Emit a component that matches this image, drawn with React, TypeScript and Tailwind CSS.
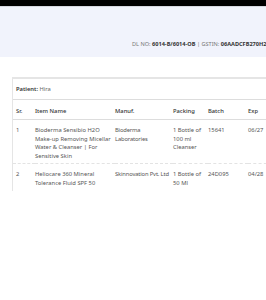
const rows = [
  {
    sr: "1",
    name: "Bioderma Sensibio H2O Make-up Removing Micellar Water & Cleanser | For Sensitive Skin",
    manuf: "Bioderma Laboratories",
    packing: "1 Bottle of 100 ml Cleanser",
    batch: "15641",
    exp: "06/27",
  },
  {
    sr: "2",
    name: "Heliocare 360 Mineral Tolerance Fluid SPF 50",
    manuf: "Skinnovation Pvt. Ltd",
    packing: "1 Bottle of 50 Ml",
    batch: "24D095",
    exp: "04/28",
  },
];

export default function App() {
  return (
    <div className="w-[266px] h-[300px] overflow-hidden bg-white text-[#333] font-['Noto_Sans',sans-serif]">
      <div className="h-[6px] bg-black" />
      <div className="h-[51px] bg-[#f1f3fc] border-t border-[#d6d8e0] flex items-end justify-end pb-[9px]">
        <p className="whitespace-nowrap text-[5.6px] text-[#777] pl-[132px] w-full overflow-hidden">
          DL NO: <span className="font-bold text-[#333]">6014-B/6014-OB</span> | GSTIN:{" "}
          <span className="font-bold text-[#333]">06AADCFB270H2ZR</span>
        </p>
      </div>

      <div className="mt-[20px] ml-[12px] border-t-2 border-l border-[#e5e5e5]">
        <div className="px-[3px] pt-[6px] pb-[5px] text-[5.8px] leading-[8.5px] border-b border-[#ddd]">
          <span className="font-semibold text-[#333]">Patient:</span> <span className="text-[#666]">Hira</span>
        </div>
        <table className="table-fixed border-collapse text-[5.8px] leading-[8.6px] text-left w-[275px]">
          <colgroup>
            <col className="w-[22px]" />
            <col className="w-[80px]" />
            <col className="w-[58px]" />
            <col className="w-[35px]" />
            <col className="w-[40px]" />
            <col className="w-[40px]" />
          </colgroup>
          <thead>
            <tr className="border-b border-[#ddd] text-[#333]">
              <th className="font-medium pl-[3px] pt-[7px] pb-[4px]">Sr.</th>
              <th className="font-medium pt-[7px] pb-[4px]">Item Name</th>
              <th className="font-medium pt-[7px] pb-[4px]">Manuf.</th>
              <th className="font-medium pt-[7px] pb-[4px]">Packing</th>
              <th className="font-medium pt-[7px] pb-[4px]">Batch</th>
              <th className="font-medium pt-[7px] pb-[4px]">Exp</th>
            </tr>
          </thead>
          <tbody className="text-[#555]">
            {rows.map((r, i) => (
              <tr key={r.sr} className={i === 0 ? "border-b border-dashed border-[#e3e3e3] align-top" : "align-top"}>
                <td className="pl-[3px] pt-[6px] pb-[3px]">{r.sr}</td>
                <td className="pt-[6px] pb-[3px] pr-[2px]">{r.name}</td>
                <td className="pt-[6px] pb-[3px] tracking-[-0.15px]">{r.manuf}</td>
                <td className="pt-[6px] pb-[3px] pr-[2px]">{r.packing}</td>
                <td className="pt-[6px] pb-[3px]">{r.batch}</td>
                <td className="pt-[6px] pb-[3px]">{r.exp}</td>
              </tr>
            ))}
          </tbody>
        </table>
      </div>
    </div>
  );
}
